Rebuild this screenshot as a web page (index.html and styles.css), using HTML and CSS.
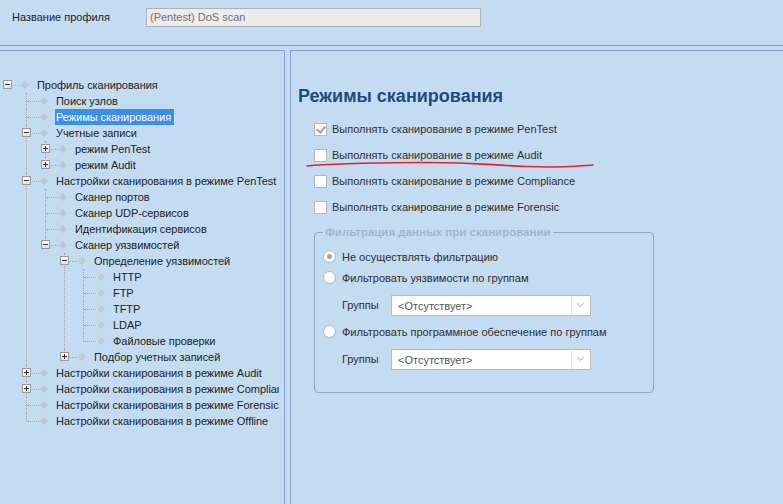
FILE: index.html
```html
<!DOCTYPE html>
<html lang="ru">
<head>
    <meta charset="UTF-8">
    <title>Профиль сканирования</title>
    <link rel="stylesheet" href="styles.css">
</head>
<body>
    <!-- Profile name -->
    <header class="top">
        <span class="top-label">Название профиля</span>
        <div class="name-box">(Pentest) DoS scan</div>
    </header>

    <div class="panes">
        <!-- Tree -->
        <aside class="left-pane">
            <ul class="tree">
                <li>
                    <div class="row"><span class="tg"><span class="box minus"></span></span><span class="dia"></span><span class="lbl">Профиль сканирования</span></div>
                    <ul>
                        <li><div class="row"><span class="tg"></span><span class="dia"></span><span class="lbl">Поиск узлов</span></div></li>
                        <li><div class="row"><span class="tg"></span><span class="dia"></span><span class="lbl selected">Режимы сканирования</span></div></li>
                        <li>
                            <div class="row"><span class="tg"><span class="box minus"></span></span><span class="dia"></span><span class="lbl">Учетные записи</span></div>
                            <ul>
                                <li><div class="row"><span class="tg"><span class="box plus"></span></span><span class="dia"></span><span class="lbl">режим PenTest</span></div></li>
                                <li><div class="row"><span class="tg"><span class="box plus"></span></span><span class="dia"></span><span class="lbl">режим Audit</span></div></li>
                            </ul>
                        </li>
                        <li>
                            <div class="row"><span class="tg"><span class="box minus"></span></span><span class="dia"></span><span class="lbl">Настройки сканирования в режиме PenTest</span></div>
                            <ul>
                                <li><div class="row"><span class="tg"></span><span class="dia"></span><span class="lbl">Сканер портов</span></div></li>
                                <li><div class="row"><span class="tg"></span><span class="dia"></span><span class="lbl">Сканер UDP-сервисов</span></div></li>
                                <li><div class="row"><span class="tg"></span><span class="dia"></span><span class="lbl">Идентификация сервисов</span></div></li>
                                <li>
                                    <div class="row"><span class="tg"><span class="box minus"></span></span><span class="dia"></span><span class="lbl">Сканер уязвимостей</span></div>
                                    <ul>
                                        <li>
                                            <div class="row"><span class="tg"><span class="box minus"></span></span><span class="dia"></span><span class="lbl">Определение уязвимостей</span></div>
                                            <ul>
                                                <li><div class="row"><span class="tg"></span><span class="dia"></span><span class="lbl">HTTP</span></div></li>
                                                <li><div class="row"><span class="tg"></span><span class="dia"></span><span class="lbl">FTP</span></div></li>
                                                <li><div class="row"><span class="tg"></span><span class="dia"></span><span class="lbl">TFTP</span></div></li>
                                                <li><div class="row"><span class="tg"></span><span class="dia"></span><span class="lbl">LDAP</span></div></li>
                                                <li><div class="row"><span class="tg"></span><span class="dia"></span><span class="lbl">Файловые проверки</span></div></li>
                                            </ul>
                                        </li>
                                        <li><div class="row"><span class="tg"><span class="box plus"></span></span><span class="dia"></span><span class="lbl">Подбор учетных записей</span></div></li>
                                    </ul>
                                </li>
                            </ul>
                        </li>
                        <li><div class="row"><span class="tg"><span class="box plus"></span></span><span class="dia"></span><span class="lbl">Настройки сканирования в режиме Audit</span></div></li>
                        <li><div class="row"><span class="tg"><span class="box plus"></span></span><span class="dia"></span><span class="lbl">Настройки сканирования в режиме Compliance</span></div></li>
                        <li><div class="row"><span class="tg"></span><span class="dia"></span><span class="lbl">Настройки сканирования в режиме Forensic</span></div></li>
                        <li><div class="row"><span class="tg"></span><span class="dia"></span><span class="lbl">Настройки сканирования в режиме Offline</span></div></li>
                    </ul>
                </li>
            </ul>
        </aside>

        <!-- Scan modes -->
        <main class="right-pane">
            <h2 class="title">Режимы сканирования</h2>

            <div class="checks">
                <div class="check-row"><span class="cb checked"></span>Выполнять сканирование в режиме PenTest</div>
                <div class="check-row"><span class="cb"></span>Выполнять сканирование в режиме Audit</div>
                <div class="check-row"><span class="cb"></span>Выполнять сканирование в режиме Compliance</div>
                <div class="check-row"><span class="cb"></span>Выполнять сканирование в режиме Forensic</div>
            </div>

            <fieldset class="filter">
                <legend>Фильтрация данных при сканировании</legend>
                <div class="radio-row"><span class="rb on"></span>Не осуществлять фильтрацию</div>
                <div class="radio-row"><span class="rb"></span>Фильтровать уязвимости по группам</div>
                <div class="group-row">
                    <span class="group-label">Группы</span>
                    <div class="combo"><span class="combo-text">&lt;Отсутствует&gt;</span><span class="combo-btn"></span></div>
                </div>
                <div class="radio-row"><span class="rb"></span>Фильтровать программное обеспечение по группам</div>
                <div class="group-row">
                    <span class="group-label">Группы</span>
                    <div class="combo"><span class="combo-text">&lt;Отсутствует&gt;</span><span class="combo-btn"></span></div>
                </div>
            </fieldset>

            <!-- hand-drawn red underline -->
            <svg class="scribble" width="290" height="12" viewBox="0 0 290 12">
                <path d="M1 6 C 20 4, 50 3, 110 2.5 S 180 5, 220 6.5 S 262 6.5, 287 5" fill="none" stroke="#e3212b" stroke-width="1.6" stroke-linecap="round"/>
            </svg>
        </main>
    </div>
</body>
</html>
```

FILE: styles.css
```css
/* General */
html, body {
    height: 100%;
}

body {
    margin: 0;
    background-color: #c4dcf1;
    font-family: "Liberation Sans", Arial, sans-serif;
    font-size: 11px;
    color: #222;
    display: flex;
    flex-direction: column;
    overflow: hidden;
}

/* Top bar */
.top {
    height: 46px;
    border-bottom: 1px solid #8b9fcb;
    display: flex;
    align-items: flex-start;
    padding-top: 8px;
    box-sizing: border-box;
}

.top-label {
    margin-left: 12px;
    width: 134px;
    line-height: 19px;
}

.name-box {
    width: 335px;
    height: 19px;
    box-sizing: border-box;
    background-color: #ececec;
    border: 1px solid #aeb2b8;
    color: #707070;
    line-height: 17px;
    padding-left: 3px;
}

/* Panes */
.panes {
    flex: 1;
    display: flex;
    margin-top: 4px;
    min-height: 0;
}

.left-pane {
    width: 285px;
    flex-shrink: 0;
    border-top: 1px solid #8b9fcb;
    border-right: 1px solid #86a0cc;
    box-sizing: border-box;
    padding-top: 26px;
    overflow: hidden;
}

.right-pane {
    flex: 1;
    margin-left: 5px;
    border-top: 1px solid #8b9fcb;
    border-left: 1px solid #86a0cc;
    padding-left: 7px;
    position: relative;
}

/* Tree */
.tree {
    width: 279px;
    overflow: hidden;
}

.tree, .tree ul {
    list-style: none;
    margin: 0;
    padding: 0;
}

.tree ul {
    padding-left: 19px;
}

.tree ul > li {
    position: relative;
}

.tree ul > li::before {
    content: '';
    position: absolute;
    left: 7px;
    top: 0;
    bottom: 0;
    border-left: 1px dotted #a2a8b0;
}

.tree ul > li:last-child::before {
    bottom: auto;
    height: 8px;
}

.row {
    height: 16px;
    display: flex;
    align-items: center;
    white-space: nowrap;
}

.tg {
    width: 16px;
    height: 16px;
    flex-shrink: 0;
    position: relative;
}

.tg::before {
    content: '';
    position: absolute;
    left: 8px;
    top: 8px;
    width: 12px;
    border-top: 1px dotted #a2a8b0;
}

.box {
    position: absolute;
    left: 3px;
    top: 3px;
    width: 9px;
    height: 9px;
    box-sizing: border-box;
    border: 1px solid #9a9a9a;
    background: linear-gradient(#ffffff, #e2e2e2);
    z-index: 1;
}

.box::before {
    content: '';
    position: absolute;
    left: 1px;
    top: 3px;
    width: 5px;
    height: 1px;
    background-color: #333;
}

.box.plus::after {
    content: '';
    position: absolute;
    left: 3px;
    top: 1px;
    width: 1px;
    height: 5px;
    background-color: #333;
}

.dia {
    width: 20px;
    height: 16px;
    flex-shrink: 0;
    position: relative;
}

.dia::before {
    content: '';
    position: absolute;
    left: 6px;
    top: 5px;
    width: 6px;
    height: 6px;
    background-color: #c3c8cf;
    transform: rotate(45deg);
}

.lbl {
    padding: 0 3px 0 1px;
    line-height: 16px;
    letter-spacing: -0.05px;
}

.lbl.selected {
    background-color: #3a8fe7;
    color: #fff;
}

/* Right side */
.title {
    margin: 35px 0 0 0;
    font-size: 18px;
    font-weight: bold;
    color: #1f4a7c;
    line-height: 20px;
}

.checks {
    margin: 10px 0 0 16px;
}

.check-row {
    height: 26px;
    display: flex;
    align-items: center;
    color: #2e2e2e;
}

.cb {
    width: 13px;
    height: 13px;
    box-sizing: border-box;
    border: 1px solid #b3b8be;
    background-color: #fff;
    margin-right: 5px;
    position: relative;
}

.cb.checked::after {
    content: '';
    position: absolute;
    left: 3px;
    top: 0px;
    width: 4px;
    height: 7px;
    border-right: 2px solid #a8a8a8;
    border-bottom: 2px solid #a8a8a8;
    transform: rotate(40deg);
}

.filter {
    margin: 6px 0 0 16px;
    width: 340px;
    height: 167px;
    box-sizing: border-box;
    border: 1px solid #94a8c6;
    border-radius: 4px;
    padding: 8px 0 0 8px;
}

.filter legend {
    font-size: 11.5px;
    font-weight: bold;
    color: #a2b4cf;
    padding: 0 2px;
    margin-left: 0;
}

.radio-row {
    height: 21px;
    display: flex;
    align-items: center;
    color: #2e2e2e;
}

.rb {
    width: 13px;
    height: 13px;
    box-sizing: border-box;
    border: 1px solid #b3b8be;
    border-radius: 50%;
    background: radial-gradient(#ffffff 50%, #eef0f2);
    margin-right: 6px;
    position: relative;
}

.rb.on::after {
    content: '';
    position: absolute;
    left: 3px;
    top: 3px;
    width: 5px;
    height: 5px;
    border-radius: 50%;
    background-color: #a4a4a4;
}

.group-row {
    height: 33px;
    box-sizing: border-box;
    padding: 7px 0 0 19px;
    display: flex;
    align-items: flex-start;
}

.group-label {
    width: 49px;
    line-height: 21px;
    color: #2e2e2e;
}

.combo {
    width: 200px;
    height: 21px;
    box-sizing: border-box;
    border: 1px solid #b8bcc2;
    background-color: #fff;
    display: flex;
    align-items: center;
}

.combo-text {
    flex: 1;
    padding-left: 6px;
    color: #555;
}

.combo-btn {
    width: 18px;
    height: 19px;
    border-left: 1px solid #e2e4e7;
    position: relative;
}

.combo-btn::after {
    content: '';
    position: absolute;
    left: 6px;
    top: 5px;
    width: 4px;
    height: 4px;
    border-right: 1px solid #b8bcc2;
    border-bottom: 1px solid #b8bcc2;
    transform: rotate(45deg);
}

.scribble {
    position: absolute;
    left: 15px;
    top: 109px;
}
```
